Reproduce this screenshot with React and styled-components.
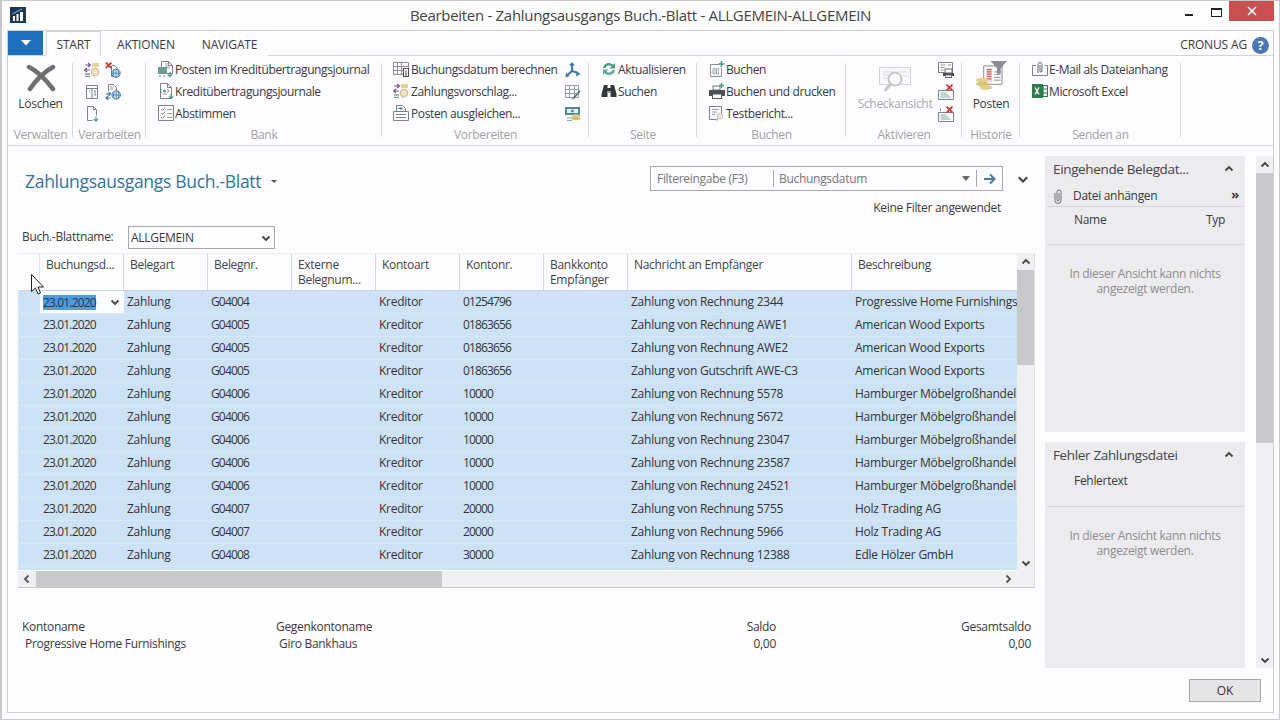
import React from "react"
import styled, { createGlobalStyle } from "styled-components"

const FONT = `"Open Sans", "Noto Sans", "Liberation Sans", sans-serif`

const GlobalStyle = createGlobalStyle`
    html, body {
        margin: 0;
        padding: 0;
        background: #fdfcfe;
    }
    * {
        box-sizing: border-box;
    }
`

const GRID_COLS = "22px 84px 84px 84px 84px 84px 84px 84px 224px 169px"

const rows = [
    ["G04004", "01254796", "Zahlung von Rechnung 2344", "Progressive Home Furnishings"],
    ["G04005", "01863656", "Zahlung von Rechnung AWE1", "American Wood Exports"],
    ["G04005", "01863656", "Zahlung von Rechnung AWE2", "American Wood Exports"],
    ["G04005", "01863656", "Zahlung von Gutschrift AWE-C3", "American Wood Exports"],
    ["G04006", "10000", "Zahlung von Rechnung 5578", "Hamburger Möbelgroßhandel"],
    ["G04006", "10000", "Zahlung von Rechnung 5672", "Hamburger Möbelgroßhandel"],
    ["G04006", "10000", "Zahlung von Rechnung 23047", "Hamburger Möbelgroßhandel"],
    ["G04006", "10000", "Zahlung von Rechnung 23587", "Hamburger Möbelgroßhandel"],
    ["G04006", "10000", "Zahlung von Rechnung 24521", "Hamburger Möbelgroßhandel"],
    ["G04007", "20000", "Zahlung von Rechnung 5755", "Holz Trading AG"],
    ["G04007", "20000", "Zahlung von Rechnung 5966", "Holz Trading AG"],
    ["G04008", "30000", "Zahlung von Rechnung 12388", "Edle Hölzer GmbH"],
]

const headers = [
    "Buchungsd...",
    "Belegart",
    "Belegnr.",
    "Externe Belegnum...",
    "Kontoart",
    "Kontonr.",
    "Bankkonto Empfänger",
    "Nachricht an Empfänger",
    "Beschreibung",
]

/* ---------- small drawn icons ---------- */

const Ico = ({ size = 16, vb = 16, children }) => (
    <IconSvg width={size} height={size} viewBox={`0 0 ${vb} ${vb}`} fill="none">
        {children}
    </IconSvg>
)

const Page = ({ x = 3, y = 1, w = 10, h = 14, c = "#7d8288" }) => (
    <path d={`M${x + .5} ${y + .5}h${w - 4}l4 4v${h - 4}h-${w}z M${x + w - 3.5} ${y + .5}v4h4`} stroke={c} fill="#fff" />
)
const Globe = ({ x = 11, y = 11 }) => (
    <g stroke="#3f78a8" fill="#dfeaf3">
        <circle cx={x} cy={y} r="4.2" />
        <path d={`M${x - 4} ${y}h8M${x} ${y - 4}v8M${x - 2} ${y - 3.6}q-1.4 3.6 0 7.2M${x + 2} ${y - 3.6}q1.4 3.6 0 7.2`} fill="none" strokeWidth=".8" />
    </g>
)
const RedX = ({ x = 4, y = 4, s = 3 }) => (
    <path d={`M${x - s} ${y - s}l${s * 2} ${s * 2}M${x + s} ${y - s}l-${s * 2} ${s * 2}`} stroke="#cf3b3b" strokeWidth="1.9" />
)
const GreenDown = ({ x = 12, y = 10 }) => (
    <path d={`M${x} ${y}v4M${x - 2.2} ${y + 2.4}l2.2 2.2 2.2-2.2`} stroke="#4f9a86" strokeWidth="1.2" />
)

const ProposalIcon = () => (
    <Ico>
        <rect x="8" y="1" width="7" height="4" fill="#e4d49b" />
        <path d="M1 3h5M4 1l2.4 2L4 5" stroke="#76589f" strokeWidth="1.2" />
        <path d="M6 8H1M3 6l-2.3 2L3 10" stroke="#76589f" strokeWidth="1.2" />
        <circle cx="11" cy="10" r="3.8" fill="#efe3bb" stroke="#c9b887" />
        <path d="M1 12h5M1 14.4h5" stroke="#7e9f92" strokeWidth="1.3" />
        <path d="M9 15l5-3" stroke="#cfcfd2" strokeWidth="1.3" />
    </Ico>
)
const DocXGlobeIcon = () => (
    <Ico>
        <path d="M6.5 3.5h3l3 3v3M6.5 3.5v11h2" stroke="#7d8288" />
        <RedX x={3.6} y={3.4} s={2.8} />
        <Globe x={11} y={11.2} />
    </Ico>
)
const ColumnsDocIcon = () => (
    <Ico>
        <path d="M2.5 1.5h11v13h-11zM2.500 4.5h11M8 4.5v10M5 7h1M10 7h2M10 9h2M10 11h2" stroke="#7d8288" />
    </Ico>
)
const DocArrowsGlobeIcon = () => (
    <Ico>
        <path d="M3.5 7V.5h5l3 3v3" stroke="#7d8288" />
        <path d="M5 3h3M5 5h3" stroke="#9aa0a6" />
        <path d="M1 10h4M3.5 8l2 2-2 2M5.500 14h-4M3 12l-2 2 2 2" stroke="#3f78a8" strokeWidth="1.1" />
        <Globe x={11.2} y={11} />
    </Ico>
)
const DocDownIcon = () => (
    <Ico>
        <path d="M3.5 14.5V.5h6l3 3v6M9.5.5v3h3M3.5 14.5h5" stroke="#7d8288" />
        <GreenDown x={12} y={10.5} />
    </Ico>
)
const JournalEntryIcon = () => (
    <Ico>
        <Page x={3} y={0} w={11} h={12} />
        <path d="M7 3h3M7 5h5M7 7h5" stroke="#9aa0a6" />
        <rect x="0" y="6" width="9" height="7" fill="#6e9c8e" />
        <path d="M1 15h2M5 15h2" stroke="#7d8288" />
        <GreenDown x={12} y={11} />
    </Ico>
)
const JournalsIcon = () => (
    <Ico>
        <Page x={2} y={0} w={11} h={15} />
        <path d="M4 6.5L2 8l2 1.5M9 6.5L11 8 9 9.5" stroke="#7d8288" />
        <circle cx="6.5" cy="8" r="1.5" fill="#4f9a86" />
        <path d="M5 11h4" stroke="#9aa0a6" />
        <GreenDown x={13} y={11} />
    </Ico>
)
const ChecklistIcon = () => (
    <Ico>
        <path d="M.5.5h15v15H.5z" stroke="#7d8288" />
        <path d="M3 4l1.4 1.500L7 2.500M3 8l1.4 1.500L7 6.500M3 12l1.4 1.500L7 10.500" stroke="#7d8288" />
        <path d="M9 4.500h5M9 8.500h5M9 12.500h5" stroke="#9aa0a6" />
    </Ico>
)
const CalendarCalcIcon = () => (
    <Ico>
        <path d="M.5 1.500h15v12H.5zM.5 5.500h15M.5 9.500h10M4.500 1.500v12M8.500 1.500v12" stroke="#8b8f94" />
        <rect x="10.5" y="7.5" width="5" height="8" fill="#fff" stroke="#4a4f55" />
        <path d="M12 10h2M12 12h2M12 14h2" stroke="#4a4f55" />
    </Ico>
)
const ApplyEntriesIcon = () => (
    <Ico>
        <path d="M3.5 6V.5h6l3 3V6" stroke="#7d8288" />
        <path d="M5 3.500h4L7.500 2M9 3.500L7.500 5" stroke="#3f78a8" />
        <path d="M.5 6.500h15v9H.5zM3 9.500h10M3 12.500h10" stroke="#7d8288" />
    </Ico>
)
const TriArrowsIcon = () => (
    <Ico>
        <path d="M7 3v6M7 9l-4 3.500M7 9l6 2" stroke="#3f78a8" strokeWidth="2.2" />
        <path d="M7 0l3 3.500H4zM.5 15.500l.5-5 3.500 3.500zM15.500 12l-4.500 2.500 .7-5z" fill="#3f78a8" />
    </Ico>
)
const GridPencilIcon = () => (
    <Ico>
        <path d="M.5 1.500h13v12H.5zM.5 5.500h13M.5 9.500h13M4.500 1.500v12M9.500 1.500v12" stroke="#9a9ea3" />
        <path d="M14.500 6L8.500 13l-2 2.500 3-1 6-7z" fill="#5f6f7d" />
    </Ico>
)
const MoneyCoinsIcon = () => (
    <Ico>
        <rect x="0" y="1" width="15" height="8" fill="#4d8a9c" />
        <rect x="2" y="3" width="11" height="4" fill="#e9f1f3" />
        <circle cx="7.5" cy="5" r="1.5" fill="#4d8a9c" />
        <ellipse cx="11" cy="10" rx="4.5" ry="1.8" fill="#e2cf8c" />
        <ellipse cx="11" cy="12.5" rx="4.5" ry="1.8" fill="#d6c078" />
        <path d="M2 12h5M2 14.500h5" stroke="#8eb09f" strokeWidth="1.2" />
    </Ico>
)
const RefreshIcon = () => (
    <Ico>
        <path d="M2 7a6 6 0 0 1 10.200-3.200L14 2v5.500H8.500l2-2A3.600 3.600 0 0 0 4.600 7z" fill="#4f9a86" />
        <path d="M14 9a6 6 0 0 1-10.200 3.200L2 14V8.500h5.500l-2 2A3.600 3.600 0 0 0 11.400 9z" fill="#5fa9a0" />
    </Ico>
)
const BinocularsIcon = () => (
    <Ico>
        <path d="M3 2h3.500v3h3V2H13l2.500 9v3H9.500V8h-3v6H.5v-3z" fill="#34383d" />
        <path d="M7 9h2" stroke="#34383d" />
    </Ico>
)
const PostDocIcon = () => (
    <Ico>
        <path d="M1.500 3.500h9M1.500 3.500v12h11V7" stroke="#8b8f94" />
        <path d="M4 7.500h2v5.500H4zM7.500 7.500h2v5.500h-2z" stroke="#a5a9ad" />
        <path d="M12.500 0v6M9.500 3h6" stroke="#4f9a86" strokeWidth="1.6" />
    </Ico>
)
const PrintPostIcon = () => (
    <Ico>
        <rect x="4" y="3" width="7" height="4" fill="#fff" stroke="#777" />
        <path d="M0 7h16v6h-3v-2H3v2H0z" fill="#4a4f55" />
        <rect x="3.5" y="11" width="9" height="4.5" fill="#fff" stroke="#555" />
        <path d="M12.500 0v5M10 2.500h5" stroke="#4f9a86" strokeWidth="1.5" />
    </Ico>
)
const TestReportIcon = () => (
    <Ico>
        <path d="M.5 1.500h12V8M.5 1.500v13H7" stroke="#7d8288" />
        <path d="M3 4.500h7M3 7h5M3 9.500h3" stroke="#9aa0a6" />
        <circle cx="11" cy="11" r="2.8" fill="#f1e7c4" stroke="#c5c7c9" />
        <path d="M9 13.500l-2 2" stroke="#a7a9ac" strokeWidth="1.5" />
    </Ico>
)
const CheckViewIcon = () => (
    <Ico size={34} vb={34}>
        <g transform="translate(0 3)">
            <path d="M1.500 5.500h31v17h-31z" stroke="#d0d2d5" fill="#f8f8fa" />
            <path d="M5 10h10M5 13h8M5 16h7M22 10h7M24 14h5" stroke="#d8dadc" />
            <circle cx="17" cy="17" r="6.5" fill="#fbfbfc" stroke="#c6c8ca" strokeWidth="2" />
            <path d="M12.500 22l-5 6" stroke="#c6c8ca" strokeWidth="3" strokeLinecap="round" />
        </g>
    </Ico>
)
const DocPrintIcon = () => (
    <Ico>
        <path d="M.5.5h14v10H.5z" stroke="#7d8288" />
        <path d="M2.500 3h5M2.500 5.500h4M2.500 8h3M10 3h3" stroke="#8f9499" />
        <rect x="7" y="7" width="7" height="4" fill="#fff" stroke="#666" />
        <path d="M5 11h11v3H5z" fill="#4a4f55" />
        <rect x="7.5" y="13" width="6" height="2.5" fill="#fff" stroke="#666" />
    </Ico>
)
const LinesXIcon = ({ stacked }) => (
    <Ico>
        {stacked && <path d="M2.500 5V2.500" stroke="#7d8288" />}
        <path d="M.5 6.500h15v9H.5z" stroke="#7d8288" />
        <path d="M2.500 9h6M2.500 11h8M2.500 13h10" stroke="#8ea89e" />
        <RedX x={11.5} y={3.6} s={3} />
    </Ico>
)
const LedgerIcon = () => (
    <Ico size={33} vb={36}>
        <path d="M9.500 6.500h20v20h-20z" fill="#fff" stroke="#7d8288" />
        <rect x="12" y="9" width="7" height="15" fill="#e9e2dc" />
        <path d="M13 10.500h5M13 13h5M13 15.500h5M13 18h5M13 20.500h5" stroke="#bf5b5b" strokeWidth="1.3" />
        <path d="M21 13h7M21 16h7M21 19h7M21 22h7" stroke="#7d8288" />
        <path d="M17 1h18l-7 8v6h-4V9z" fill="#8a8d91" />
        <ellipse cx="8" cy="22" rx="7" ry="2.6" fill="#e2cf8c" />
        <ellipse cx="8" cy="26" rx="7" ry="2.6" fill="#d8c47d" />
        <ellipse cx="12" cy="30" rx="7" ry="2.6" fill="#e2cf8c" />
    </Ico>
)
const MailClipIcon = () => (
    <Ico>
        <path d="M4 4.500H.5v10h15v-10H13" stroke="#7d8288" />
        <path d="M6 12V3.500a2 2 0 0 1 4 0V10a1 1 0 0 1-2 0V4" stroke="#5f656b" />
    </Ico>
)
const ExcelIcon = () => (
    <Ico>
        <rect x="0" y="1" width="11" height="14" fill="#2f7d4f" />
        <path d="M3 4.500l4 7M7 4.500l-4 7" stroke="#fff" strokeWidth="1.4" />
        <path d="M11 2.500h4.500v11H11zM11 6h4.500M11 10h4.500" stroke="#2f7d4f" strokeWidth="1.2" />
    </Ico>
)
const DeleteIcon = () => (
    <Ico size={30} vb={30}>
        <path d="M3 4c8 4 17 13 24 22M27 4C18 9 10 17 4 26" stroke="#6f6f70" strokeWidth="4.5" strokeLinecap="round" />
    </Ico>
)
const ClipIcon = () => (
    <Ico>
        <path d="M5 5v7.500a3 3 0 0 0 6 0V4a2 2 0 0 0-4 0v8a1 1 0 0 0 2 0V5" stroke="#6c7075" />
    </Ico>
)
const Chevron = ({ up, color = "#444", size = 10 }) => (
    <Ico size={size} vb={10}>
        <path d={up ? "M1.500 6.500L5 3l3.500 3.500" : "M1.500 3.500L5 7l3.500-3.500"} stroke={color} strokeWidth="1.8" />
    </Ico>
)
const SideChevron = ({ left }) => (
    <Ico size={10} vb={10}>
        <path d={left ? "M6.500 1.500L3 5l3.500 3.500" : "M3.500 1.500L7 5 3.500 8.500"} stroke="#555" strokeWidth="1.8" />
    </Ico>
)

/* ---------- parts of the ribbon data ---------- */

const bankItems = [
    [<JournalEntryIcon />, "Posten im Kreditübertragungsjournal"],
    [<JournalsIcon />, "Kreditübertragungsjournale"],
    [<ChecklistIcon />, "Abstimmen"],
]
const prepItems = [
    [<CalendarCalcIcon />, "Buchungsdatum berechnen"],
    [<ProposalIcon />, "Zahlungsvorschlag..."],
    [<ApplyEntriesIcon />, "Posten ausgleichen..."],
]
const pageItems = [
    [<RefreshIcon />, "Aktualisieren"],
    [<BinocularsIcon />, "Suchen"],
]
const postItems = [
    [<PostDocIcon />, "Buchen"],
    [<PrintPostIcon />, "Buchen und drucken"],
    [<TestReportIcon />, "Testbericht..."],
]
const sendItems = [
    [<MailClipIcon />, "E-Mail als Dateianhang"],
    [<ExcelIcon />, "Microsoft Excel"],
]

function ItemList({ items, gap = 1 }) {
    return (
        <SmallCol>
            {items.map(([icon, text]) => (
                <SmallItem key={text} $gap={gap}>
                    {icon}
                    <span>{text}</span>
                </SmallItem>
            ))}
        </SmallCol>
    )
}

function SidePanel({ title, children }) {
    return (
        <Panel>
            <PanelTitle>
                <span>{title}</span>
                <Chevron up />
            </PanelTitle>
            {children}
        </Panel>
    )
}

function Group({ label, children, ...rest }) {
    return (
        <GroupBox {...rest}>
            <GroupBody>{children}</GroupBody>
            <GroupLabel>{label}</GroupLabel>
        </GroupBox>
    )
}

export default function App() {
    return (
        <Window>
            <GlobalStyle />
            <TitleBar>
                <AppIcon>
                    <svg width="16" height="16" viewBox="0 0 16 16">
                        <rect width="16" height="16" fill="#1d3557" />
                        <path d="M3 9h2v5H3zM6.500 7h2v7h-2zM10 5h3v9h-3z" fill="#fff" />
                        <path d="M2.500 7L8 4l4-2" stroke="#8fc0e8" fill="none" />
                    </svg>
                </AppIcon>
                <WindowTitle>Bearbeiten - Zahlungsausgangs Buch.-Blatt - ALLGEMEIN-ALLGEMEIN</WindowTitle>
                <WindowControls>
                    <MinButton />
                    <MaxButton />
                    <CloseButton>
                        <svg width="10" height="10" viewBox="0 0 10 10">
                            <path d="M1 1l8 8M9 1l-8 8" stroke="#fff" strokeWidth="1.6" />
                        </svg>
                    </CloseButton>
                </WindowControls>
            </TitleBar>

            <Frame>
                <TabRow>
                    <FileButton>
                        <svg width="10" height="6" viewBox="0 0 10 6">
                            <path d="M0 0h10L5 5.500z" fill="#fff" />
                        </svg>
                    </FileButton>
                    <Tab $active>START</Tab>
                    <Tab>AKTIONEN</Tab>
                    <Tab>NAVIGATE</Tab>
                    <Company>CRONUS AG</Company>
                    <HelpButton>?</HelpButton>
                </TabRow>

                <Ribbon>
                    <Group $width={65} label="Verwalten">
                        <LargeButton>
                            <DeleteIcon />
                            <span>Löschen</span>
                        </LargeButton>
                    </Group>
                    <Group $width={73} $pad={11} label="Verarbeiten">
                        <IconCol><ProposalIcon /><ColumnsDocIcon /><DocDownIcon /></IconCol>
                        <IconCol><DocXGlobeIcon /><DocArrowsGlobeIcon /></IconCol>
                    </Group>
                    <Group $width={236} $pad={12} label="Bank">
                        <ItemList items={bankItems} />
                    </Group>
                    <Group $width={207} $pad={11} label="Vorbereiten">
                        <ItemList items={prepItems} gap={2} />
                        <RightIcons>
                            <IconCol><TriArrowsIcon /><GridPencilIcon /><MoneyCoinsIcon /></IconCol>
                        </RightIcons>
                    </Group>
                    <Group $width={108} $pad={12} label="Seite">
                        <ItemList items={pageItems} />
                    </Group>
                    <Group $width={149} $pad={12} label="Buchen">
                        <ItemList items={postItems} />
                    </Group>
                    <Group $width={116} $pad={11} label="Aktivieren">
                        <LargeButton $disabled>
                            <CheckViewIcon />
                            <span>Scheckansicht</span>
                        </LargeButton>
                        <RightIcons>
                            <IconCol><DocPrintIcon /><LinesXIcon /><LinesXIcon stacked /></IconCol>
                        </RightIcons>
                    </Group>
                    <Group $width={58} label="Historie">
                        <LargeButton>
                            <LedgerIcon />
                            <span>Posten</span>
                        </LargeButton>
                    </Group>
                    <Group $width={161} $pad={12} label="Senden an">
                        <ItemList items={sendItems} />
                    </Group>
                </Ribbon>

                <Body>
                    <Content>
                        <Main>
                            <HeadRow>
                                <PageTitle>
                                    Zahlungsausgangs Buch.-Blatt
                                    <TitleCaret />
                                </PageTitle>
                                <FilterArea>
                                    <FilterRow>
                                        <FilterBox>
                                            <FilterHint>Filtereingabe (F3)</FilterHint>
                                            <FilterField>Buchungsdatum</FilterField>
                                            <FilterCaret />
                                            <FilterGo>
                                                <svg width="14" height="12" viewBox="0 0 14 12">
                                                    <path d="M1 6h10M7 1.500L11.500 6 7 10.500" stroke="#4878a8" strokeWidth="2" fill="none" />
                                                </svg>
                                            </FilterGo>
                                        </FilterBox>
                                        <Chevron size={12} color="#444" />
                                    </FilterRow>
                                    <FilterNote>Keine Filter angewendet</FilterNote>
                                </FilterArea>
                            </HeadRow>

                            <NameRow>
                                <NameLabel>Buch.-Blattname:</NameLabel>
                                <NameSelect>
                                    ALLGEMEIN
                                    <Chevron />
                                </NameSelect>
                            </NameRow>

                            <GridFrame>
                                <GridTop>
                                    <GridBody>
                                        <HeaderRow>
                                            <HeaderCell />
                                            {headers.map((h) => <HeaderCell key={h}>{h}</HeaderCell>)}
                                        </HeaderRow>
                                        {rows.map((r, i) => (
                                            <DataRow key={i}>
                                                <Cell />
                                                {i === 0 ? (
                                                    <EditCell>
                                                        <Selected>23.01.2020</Selected>
                                                        <Chevron />
                                                    </EditCell>
                                                ) : (
                                                    <Cell $num>23.01.2020</Cell>
                                                )}
                                                <Cell>Zahlung</Cell>
                                                <Cell $num>{r[0]}</Cell>
                                                <Cell />
                                                <Cell>Kreditor</Cell>
                                                <Cell $num>{r[1]}</Cell>
                                                <Cell />
                                                <Cell>{r[2]}</Cell>
                                                <Cell>{r[3]}</Cell>
                                            </DataRow>
                                        ))}
                                    </GridBody>
                                    <VScroll>
                                        <ScrollEnd $h={17}><Chevron up /></ScrollEnd>
                                        <VThumb />
                                        <ScrollFill />
                                        <ScrollEnd $h={17}><Chevron /></ScrollEnd>
                                    </VScroll>
                                </GridTop>
                                <HScroll>
                                    <ScrollEnd $w={18}><SideChevron left /></ScrollEnd>
                                    <HThumb />
                                    <ScrollFill />
                                    <ScrollEnd $w={18}><SideChevron /></ScrollEnd>
                                    <ScrollEnd $w={17} />
                                </HScroll>
                            </GridFrame>

                            <Totals>
                                <TotalCol $width={254}>
                                    <span>Kontoname</span>
                                    <TotalValue>Progressive Home Furnishings</TotalValue>
                                </TotalCol>
                                <TotalCol $width={300}>
                                    <span>Gegenkontoname</span>
                                    <TotalValue>Giro Bankhaus</TotalValue>
                                </TotalCol>
                                <TotalCol $width={200} $right>
                                    <span>Saldo</span>
                                    <span>0,00</span>
                                </TotalCol>
                                <TotalCol $width={255} $right>
                                    <span>Gesamtsaldo</span>
                                    <span>0,00</span>
                                </TotalCol>
                            </Totals>
                        </Main>

                        <Side>
                            <SidePanel title="Eingehende Belegdat...">
                                <ClipRow>
                                    <ClipIcon />
                                    <span>Datei anhängen</span>
                                    <MoreMark>»</MoreMark>
                                </ClipRow>
                                <PanelColumns $pad={5}>
                                    <span>Name</span>
                                    <span>Typ</span>
                                </PanelColumns>
                                <EmptyNote>In dieser Ansicht kann nichts<br />angezeigt werden.</EmptyNote>
                            </SidePanel>
                            <SidePanel title="Fehler Zahlungsdatei">
                                <PanelColumns $pad={4}>
                                    <span>Fehlertext</span>
                                </PanelColumns>
                                <EmptyNote>In dieser Ansicht kann nichts<br />angezeigt werden.</EmptyNote>
                            </SidePanel>
                        </Side>

                        <PageScroll>
                            <ScrollEnd $h={17}><Chevron up /></ScrollEnd>
                            <PageThumb />
                            <ScrollFill />
                            <ScrollEnd $h={17}><Chevron /></ScrollEnd>
                        </PageScroll>
                    </Content>

                    <Actions>
                        <OkButton>OK</OkButton>
                    </Actions>
                </Body>
            </Frame>

            <MouseCursor width="13" height="22" viewBox="0 0 13 22">
                <path d="M.5.500v17l4-3.500 2.500 6 2.500-1-2.500-6h5.500z" fill="#fff" stroke="#222" />
            </MouseCursor>
        </Window>
    )
}

const IconSvg = styled.svg`
    display: block;
    flex: none;
`

const Window = styled.div`
    position: relative;
    width: 1280px;
    height: 720px;
    display: flex;
    flex-direction: column;
    padding: 0 5px 6px 5px;
    overflow: hidden;
    background: #fdfcfe;
    border: 1px solid #c8c8ca;
    border-left-width: 2px;
    font-family: ${FONT};
    font-size: 12px;
    letter-spacing: -0.3px;
    color: #3a3a3c;
`

const TitleBar = styled.header`
    height: 29px;
    flex: none;
    display: flex;
    align-items: flex-start;
    background: #fdfdfd;
`

const AppIcon = styled.div`
    width: 16px;
    height: 16px;
    margin: 6px 0 0 3px;
`

const WindowTitle = styled.h1`
    flex: 1;
    margin: 3px 0 0 71px;
    font-size: 15px;
    line-height: 22px;
    font-weight: 400;
    text-align: center;
    letter-spacing: -0.3px;
    color: #444;
`

const WindowControls = styled.div`
    display: flex;
    align-items: flex-start;
`

const MinButton = styled.div`
    width: 8px;
    height: 2px;
    margin: 13px 0 0 1px;
    background: #222;
`

const MaxButton = styled.div`
    width: 11px;
    height: 9px;
    margin: 7px 0 0 18px;
    border: 1px solid #222;
    border-top-width: 2px;
`

const CloseButton = styled.div`
    width: 45px;
    height: 20px;
    margin-left: 7px;
    background: #c75050;
    display: flex;
    align-items: center;
    justify-content: center;
`

const Frame = styled.div`
    flex: 1;
    min-height: 0;
    display: flex;
    flex-direction: column;
    border: 1px solid #cfcfd2;
`

const TabRow = styled.nav`
    height: 25px;
    flex: none;
    display: flex;
    align-items: flex-end;
    padding-right: 4px;
    border-bottom: 1px solid #d4d4d6;
    background: #fdfcfe;
`

const FileButton = styled.div`
    width: 35px;
    height: 24px;
    display: flex;
    align-items: center;
    justify-content: center;
    background: #1e6fbe;
`

const Tab = styled.div`
    height: ${(p) => (p.$active ? "25px" : "24px")};
    width: ${(p) => (p.$active ? "55px" : "auto")};
    margin-left: ${(p) => (p.$active ? "3px" : "0")};
    margin-bottom: -1px;
    display: flex;
    align-items: center;
    justify-content: center;
    padding: ${(p) => (p.$active ? "2px 0 0" : "1px 10px 0 15px")};
    border: 1px solid ${(p) => (p.$active ? "#d4d4d6" : "transparent")};
    border-bottom-color: ${(p) => (p.$active ? "#fdfcfe" : "transparent")};
    background: #fdfcfe;
    letter-spacing: -0.15px;
`

const Company = styled.div`
    margin: 0 5px 2px auto;
    line-height: 16px;
    letter-spacing: -0.15px;
`

const HelpButton = styled.div`
    width: 17px;
    height: 17px;
    margin-bottom: 1px;
    border-radius: 50%;
    background: #4a78b5;
    color: #fff;
    font-size: 13px;
    font-weight: 700;
    line-height: 17px;
    text-align: center;
`

const Ribbon = styled.section`
    height: 90px;
    flex: none;
    display: flex;
    border-bottom: 1px solid #d8d8da;
`

const GroupBox = styled.div`
    position: relative;
    width: ${(p) => p.$width}px;
    flex: none;
    display: flex;
    flex-direction: column;
    padding-left: ${(p) => p.$pad || 0}px;

    &::after {
        content: "";
        position: absolute;
        top: 7px;
        bottom: 8px;
        right: 0;
        width: 1px;
        background: #d8d8da;
    }
`

const GroupBody = styled.div`
    height: 71px;
    flex: none;
    display: flex;
    gap: 5px;
`

const GroupLabel = styled.div`
    position: absolute;
    left: 0;
    right: 0;
    top: 71px;
    line-height: 16px;
    text-align: center;
    color: #a2a2a4;
`

const LargeButton = styled.div`
    flex: 1;
    min-width: 0;
    display: flex;
    flex-direction: column;
    align-items: center;
    height: 59px;
    justify-content: flex-end;
    color: ${(p) => (p.$disabled ? "#a8a8aa" : "#3a3a3c")};
    white-space: nowrap;

    span {
        height: 22px;
        line-height: 22px;
    }
`

const SmallCol = styled.div`
    display: flex;
    flex-direction: column;
    padding-top: 2px;
`

const IconCol = styled.div`
    display: flex;
    flex-direction: column;
    gap: 6px;
    padding-top: 6px;
`

const SmallItem = styled.div`
    height: 22px;
    display: flex;
    align-items: center;
    gap: ${(p) => p.$gap}px;
    white-space: nowrap;
    letter-spacing: -0.38px;
`

const RightIcons = styled.div`
    margin-left: auto;
    padding-right: 8px;
`

const Body = styled.div`
    flex: 1;
    min-height: 0;
    display: flex;
    flex-direction: column;
`

const Content = styled.div`
    height: 525px;
    flex: none;
    display: flex;
`

const Main = styled.main`
    width: 1017px;
    margin-left: 10px;
    flex: none;
`

const HeadRow = styled.div`
    height: 80px;
    display: flex;
    justify-content: space-between;
`

const PageTitle = styled.h2`
    margin: 23px 0 0 7px;
    height: 24px;
    display: flex;
    align-items: center;
    font-size: 17.5px;
    line-height: 24px;
    font-weight: 400;
    letter-spacing: -0.3px;
    color: #31759c;
`

const TitleCaret = styled.i`
    width: 0;
    height: 0;
    margin: 0 0 0 10px;
    border: 3px solid transparent;
    border-top: 3px solid #555;
    border-bottom: 0;
`

const FilterArea = styled.div`
    display: flex;
    flex-direction: column;
    align-items: flex-end;
    padding: 20px 6px 0 0;
`

const FilterRow = styled.div`
    display: flex;
    align-items: center;
    gap: 14px;
`

const FilterBox = styled.div`
    width: 353px;
    height: 25px;
    display: flex;
    align-items: center;
    border: 1px solid #a8a8aa;
    background: #fdfcfe;
`

const FilterHint = styled.div`
    width: 123px;
    height: 17px;
    line-height: 17px;
    padding-left: 6px;
    border-right: 1px solid #a8a8aa;
    color: #77777a;
`

const FilterField = styled.div`
    flex: 1;
    padding-left: 5px;
    color: #77777a;
`

const FilterCaret = styled.i`
    width: 0;
    height: 0;
    margin-right: 6px;
    border: 4px solid transparent;
    border-top: 5px solid #666;
    border-bottom: 0;
`

const FilterGo = styled.div`
    width: 26px;
    height: 17px;
    display: flex;
    align-items: center;
    justify-content: center;
    border-left: 1px solid #a8a8aa;
`

const FilterNote = styled.div`
    margin: 9px 28px 0 0;
    line-height: 16px;
`

const NameRow = styled.div`
    height: 27px;
    display: flex;
    align-items: flex-start;
    padding-left: 4px;
`

const NameLabel = styled.div`
    width: 106px;
    line-height: 22px;
`

const NameSelect = styled.div`
    width: 147px;
    height: 23px;
    display: flex;
    align-items: center;
    justify-content: space-between;
    padding: 0 3px 0 2px;
    border: 1px solid #a8a8aa;
`

const GridFrame = styled.div`
    width: 1017px;
    border-bottom: 1px solid #c8c8ca;
    border-right: 1px solid #e0e0e2;
`

const GridTop = styled.div`
    display: flex;
    height: 318px;
`

const GridBody = styled.div`
    width: 999px;
    overflow: hidden;
    background: #cde3f5;
    border-bottom: 1px solid #fdfcfe;
`

const HeaderRow = styled.div`
    display: grid;
    grid-template-columns: ${GRID_COLS};
    height: 38px;
    background: #fff;
    border-top: 1px solid #ececee;
`

const HeaderCell = styled.div`
    padding: 3px 6px 0;
    line-height: 15px;
    border-right: 1px solid #d6d6d8;
    border-bottom: 1px solid #c9d6e0;
    color: #444;
    background: #fdfcfe;
    overflow: hidden;

    &:first-child {
        border-right-color: #e4e4e6;
    }
    &:last-child {
        border-right: 0;
    }
`

const DataRow = styled.div`
    display: grid;
    grid-template-columns: ${GRID_COLS};
    height: 23px;
    background: #cde3f5;
    border-bottom: 1px solid #d7e8f6;
`

const Cell = styled.div`
    padding-left: 3px;
    line-height: 22px;
    white-space: nowrap;
    overflow: hidden;
    color: #333;
    letter-spacing: ${(p) => (p.$num ? "-0.85px" : "-0.25px")};
`

const EditCell = styled(Cell)`
    display: flex;
    align-items: center;
    justify-content: space-between;
    padding-right: 4px;
    background: #fbfcfe;
    letter-spacing: -0.85px;
`

const Selected = styled.span`
    height: 15px;
    line-height: 15px;
    background: #4d9be0;
    color: #2d3640;
`

const VScroll = styled.div`
    width: 17px;
    display: flex;
    flex-direction: column;
    background: #f0f0f2;
`

const ScrollEnd = styled.div`
    flex: none;
    height: ${(p) => (p.$h ? p.$h + "px" : "auto")};
    width: ${(p) => (p.$w ? p.$w + "px" : "auto")};
    display: flex;
    align-items: center;
    justify-content: center;
`

const ScrollFill = styled.div`
    flex: 1;
`

const VThumb = styled.div`
    height: 95px;
    background: #c9c8ca;
`

const HScroll = styled.div`
    height: 16px;
    display: flex;
    background: #f0f0f2;
`

const HThumb = styled.div`
    width: 406px;
    background: #c9c8ca;
`

const Totals = styled.div`
    display: flex;
    padding: 30px 0 0 4px;
    width: 1017px;
`

const TotalCol = styled.div`
    width: ${(p) => p.$width}px;
    display: flex;
    flex-direction: column;
    align-items: ${(p) => (p.$right ? "flex-end" : "flex-start")};
    line-height: 17px;
`

const TotalValue = styled.span`
    padding-left: 3px;
`

const Side = styled.aside`
    width: 200px;
    margin-left: 10px;
    flex: none;
    display: flex;
    flex-direction: column;
    gap: 10px;
    padding: 10px 0 3px;
`

const Panel = styled.div`
    background: #ecebee;
    flex: 1;
    padding: 0 2px;

    &:first-child {
        flex: 0 0 276px;
    }
`

const PanelTitle = styled.div`
    height: 27px;
    display: flex;
    align-items: center;
    justify-content: space-between;
    padding: 0 9px 2px 6px;
    font-size: 13.5px;
    letter-spacing: -0.35px;
    color: #444;
`

const ClipRow = styled.div`
    height: 24px;
    display: flex;
    align-items: center;
    gap: 7px;
    padding: 2px 4px 0 3px;
    border-bottom: 1px solid #d4d4d6;

    span:nth-child(2) {
        flex: 1;
    }
`

const MoreMark = styled.span`
    margin-top: -3px;
    font-size: 13px;
    font-weight: 700;
`

const PanelColumns = styled.div`
    height: 38px;
    display: flex;
    justify-content: space-between;
    padding: ${(p) => p.$pad}px 18px 0 27px;
    line-height: 16px;
    border-bottom: 1px solid #d4d4d6;
`

const EmptyNote = styled.p`
    margin: 21px 0 0;
    line-height: 15px;
    text-align: center;
    color: #8c8c8e;
`

const PageScroll = styled.div`
    width: 17px;
    margin: 10px 0 3px 11px;
    flex: none;
    display: flex;
    flex-direction: column;
    background: #f0f0f2;
`

const PageThumb = styled.div`
    height: 270px;
    background: #c9c8ca;
`

const Actions = styled.div`
    display: flex;
    justify-content: flex-end;
    padding: 8px 12px 0 0;
`

const OkButton = styled.button`
    width: 72px;
    height: 23px;
    padding: 0;
    border: 1px solid #a8a8aa;
    background: #e6e6e6;
    font: inherit;
    color: #333;
`

const MouseCursor = styled.svg`
    position: absolute;
    left: 29px;
    top: 273px;
`
